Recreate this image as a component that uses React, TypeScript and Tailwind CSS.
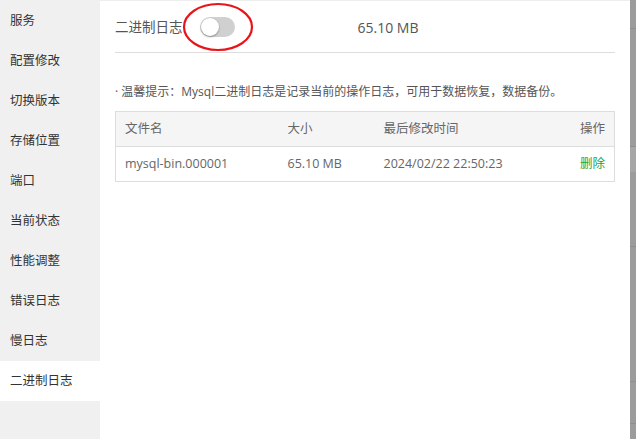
import { useState } from 'react';

const menu = ['服务', '配置修改', '切换版本', '存储位置', '端口', '当前状态', '性能调整', '错误日志', '慢日志', '二进制日志'];

const font = { fontFamily: '"Open Sans", "Noto Sans CJK SC", sans-serif' };

const App = () => {
  const [active] = useState('二进制日志');
  const [enabled, setEnabled] = useState(false);

  return (
    <div className="flex h-[439px] w-[636px] overflow-hidden bg-white text-[#333]" style={font}>
      {/* 左侧菜单 */}
      <aside className="flex w-[100px] shrink-0 flex-col bg-[#f0f0f0] pt-px">
        {menu.map((item) => (
          <div
            key={item}
            className={`flex h-10 items-center pl-[10px] text-[12.5px] ${item === active ? 'bg-white' : ''}`}
          >
            {item}
          </div>
        ))}
      </aside>

      {/* 主内容 */}
      <main className="flex flex-1 flex-col border-t border-[#eee] px-[15px]">
        <div className="flex h-[52px] items-center border-b border-[#ddd] pt-px">
          <span className="text-[13.5px] text-[#555]">二进制日志</span>
          <div className="relative ml-[17px]">
            <button
              onClick={() => setEnabled(!enabled)}
              className={`relative block h-[20px] w-[35px] rounded-full ${enabled ? 'bg-[#20a53a]' : 'bg-[#d0d0d0]'}`}
            >
              <span
                className={`absolute top-[1px] h-[18px] w-[18px] rounded-full bg-white shadow-[0_1px_2px_rgba(0,0,0,0.35)] ${enabled ? 'left-[16px]' : 'left-[1px]'}`}
              />
            </button>
            {/* 红圈标注 */}
            <svg className="pointer-events-none absolute left-[-18px] top-[-15px]" width="72" height="52" viewBox="0 0 72 52">
              <ellipse cx="36" cy="25" rx="34" ry="23" fill="none" stroke="#e8141a" strokeWidth="2.2" />
            </svg>
          </div>
          <span className="ml-[123px] text-[14px] text-[#555]">65.10 MB</span>
        </div>

        <p className="mt-[30px] text-[12px] text-[#555]">· 温馨提示：Mysql二进制日志是记录当前的操作日志，可用于数据恢复，数据备份。</p>

        <table className="mt-[10px] w-full border-collapse border border-[#ddd] text-[12.5px] text-[#666]">
          <thead>
            <tr className="h-[35px] bg-[#f5f5f5]">
              <th className="pl-[9px] text-left font-normal">文件名</th>
              <th className="text-left font-normal">大小</th>
              <th className="text-left font-normal">最后修改时间</th>
              <th className="pr-[9px] text-right font-normal">操作</th>
            </tr>
          </thead>
          <tbody>
            <tr className="h-[35px] border-t border-[#ddd]">
              <td className="w-[172px] pl-[9px]">mysql-bin.000001</td>
              <td className="w-[96px]">65.10 MB</td>
              <td>2024/02/22 22:50:23</td>
              <td className="pr-[9px] text-right text-[#20a53a]">删除</td>
            </tr>
          </tbody>
        </table>
      </main>

      {/* 右侧遮罩边缘 */}
      <div className="flex w-[6px] shrink-0 flex-col bg-[#9c9c9c]">
        <div className="h-[29px] border-b border-[#8e8e8e]" />
        <div className="h-[118px] border-b border-[#8e8e8e]" />
        <div className="h-[25px] bg-[#a6a6a6]" />
        <div className="h-[75px] border-b border-[#8e8e8e]" />
        <div className="h-[135px] border-b border-[#8e8e8e]" />
        <div className="h-[42px] border-b border-[#8e8e8e]" />
      </div>
    </div>
  );
};

export default App;
